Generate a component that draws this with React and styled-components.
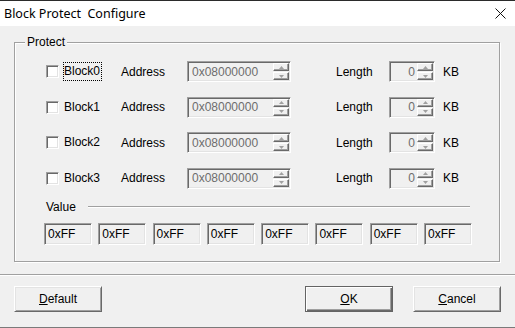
import React from "react";
import styled, { createGlobalStyle } from "styled-components";

const Global = createGlobalStyle`
  html, body { margin: 0; padding: 0; background: #f0f0f0; }
  * { box-sizing: border-box; }
`;

const Window = styled.div`
  width: 515px;
  height: 328px;
  display: flex;
  flex-direction: column;
  background: #f0f0f0;
  border-top: 1px solid #2b2b2b;
  font-family: "Liberation Sans", Arial, sans-serif;
  font-size: 12px;
  color: #000;
  overflow: hidden;
`;

const TitleBar = styled.div`
  height: 25px;
  background: #fff;
  display: flex;
  align-items: center;
  justify-content: space-between;
  padding: 0 9px 0 4px;
  flex-shrink: 0;
`;

const Title = styled.span`
  font-family: "Noto Sans", "Open Sans", sans-serif;
  font-size: 12.5px;
  white-space: pre;
  color: #000;
`;

const CloseIcon = () => (
  <svg width="11" height="11" viewBox="0 0 11 11">
    <path d="M0.5 0.5 L10.5 10.5 M10.5 0.5 L0.5 10.5" stroke="#111" strokeWidth="1" />
  </svg>
);

const Body = styled.div`
  padding: 16px 15px 0 14px;
`;

const Group = styled.div`
  position: relative;
  height: 220px;
  border: 1px solid #a0a0a0;
  box-shadow: inset 1px 1px 0 #fff, 1px 1px 0 #fff;
  padding-top: 18px;
`;

const Legend = styled.span`
  position: absolute;
  top: -8px;
  left: 10px;
  padding: 0 2px;
  background: #f0f0f0;
  line-height: 14px;
`;

const Rows = styled.div`
  display: flex;
  flex-direction: column;
  gap: 14.5px;
  padding-left: 31px;
`;

const Row = styled.div`
  display: flex;
  align-items: center;
  height: 21px;
`;

const CheckCell = styled.div`
  width: 75px;
  display: flex;
  align-items: center;
`;

const CheckBox = styled.span`
  width: 13px;
  height: 13px;
  background: #fff;
  border: 1px solid;
  border-color: #a0a0a0 #fff #fff #a0a0a0;
  box-shadow: inset 1px 1px 0 #696969, inset -1px -1px 0 #e3e3e3;
  margin-right: 4px;
  flex-shrink: 0;
`;

const CheckText = styled.span`
  padding: 1px 1px 2px 0;
  line-height: 14px;
  border: 1px dotted ${(p) => (p.$focus ? "#000" : "transparent")};
`;

const Label = styled.span`
  width: ${(p) => p.$w}px;
  flex-shrink: 0;
`;

const Field = styled.div`
  width: ${(p) => p.$w}px;
  height: 21px;
  flex-shrink: 0;
  display: flex;
  align-items: stretch;
  border: 1px solid;
  border-color: #a0a0a0 #fff #fff #a0a0a0;
  box-shadow: inset 1px 1px 0 #696969, inset -1px -1px 0 #e3e3e3;
  background: #f0f0f0;
  padding: 1px 1px 1px 1px;
`;

const FieldText = styled.span`
  flex: 1;
  display: flex;
  align-items: center;
  justify-content: ${(p) => (p.$right ? "flex-end" : "flex-start")};
  padding: 0 2px 0 3px;
  color: #6d6d6d;
`;

const Spin = styled.div`
  width: 16px;
  display: flex;
  flex-direction: column;
  gap: 1px;
`;

const SpinBtn = styled.div`
  flex: 1;
  background: #f0f0f0;
  border: 1px solid;
  border-color: #fff #696969 #696969 #fff;
  box-shadow: inset -1px -1px 0 #a0a0a0;
  display: flex;
  align-items: center;
  justify-content: center;
`;

const Arrow = ({ down }) => (
  <svg width="5" height="3" viewBox="0 0 5 3">
    <path d={down ? "M0 0 H5 L2.5 3 Z" : "M0 3 H5 L2.5 0 Z"} fill="#a0a0a0" />
  </svg>
);

const SpinBox = ({ w, value, right }) => (
  <Field $w={w}>
    <FieldText $right={right}>{value}</FieldText>
    <Spin>
      <SpinBtn>
        <Arrow />
      </SpinBtn>
      <SpinBtn>
        <Arrow down />
      </SpinBtn>
    </Spin>
  </Field>
);

const ValueHeader = styled.div`
  display: flex;
  align-items: center;
  height: 14px;
  margin-top: 11.5px;
  padding: 0 29px 0 31px;
`;

const Rule = styled.div`
  flex: 1;
  height: 2px;
  margin-left: 12px;
  border-top: 1px solid #a0a0a0;
  border-bottom: 1px solid #fff;
`;

const Values = styled.div`
  display: grid;
  grid-template-columns: repeat(8, 48px);
  column-gap: 6.29px;
  padding-left: 29px;
  margin-top: 9px;
`;

const ValueBox = styled.div`
  height: 22px;
  border: 1px solid;
  border-color: #a0a0a0 #fff #fff #a0a0a0;
  box-shadow: inset 1px 1px 0 #696969, inset -1px -1px 0 #e3e3e3;
  background: #f0f0f0;
  display: flex;
  align-items: center;
  padding-left: 3px;
`;

const Separator = styled.div`
  margin-top: 12px;
  height: 2px;
  border-top: 1px solid #a0a0a0;
  border-bottom: 1px solid #fff;
`;

const Footer = styled.div`
  display: flex;
  padding: 10px 14px 0 14px;
  height: 51px;
`;

const Button = styled.div`
  width: 88px;
  height: 26px;
  display: flex;
  align-items: center;
  justify-content: center;
  background: #f0f0f0;
  border: 1px solid;
  border-color: ${(p) => (p.$default ? "#646464" : "#fff #696969 #696969 #fff")};
  box-shadow: ${(p) =>
    p.$default
      ? "inset 1px 1px 0 #fff, inset -1px -1px 0 #696969, inset -2px -2px 0 #a0a0a0"
      : "inset 1px 1px 0 #e3e3e3, inset -1px -1px 0 #a0a0a0"};
  margin-left: ${(p) => p.$ml || 0}px;
`;

const BottomLine = styled.div`
  height: 1px;
  background: #7a7a7a;
`;

const blocks = ["Block0", "Block1", "Block2", "Block3"];

export default function App() {
  return (
    <>
      <Global />
      <Window>
        <TitleBar>
          <Title>Block Protect  Configure</Title>
          <CloseIcon />
        </TitleBar>
        <Body>
          <Group>
            <Legend>Protect</Legend>
            <Rows>
              {blocks.map((b, i) => (
                <Row key={b}>
                  <CheckCell>
                    <CheckBox />
                    <CheckText $focus={i === 0}>{b}</CheckText>
                  </CheckCell>
                  <Label $w={66}>Address</Label>
                  <SpinBox w={104} value="0x08000000" />
                  <Label $w={45} />
                  <Label $w={53}>Length</Label>
                  <SpinBox w={46} value="0" right />
                  <Label $w={8} />
                  <span>KB</span>
                </Row>
              ))}
            </Rows>
            <ValueHeader>
              <span>Value</span>
              <Rule />
            </ValueHeader>
            <Values>
              {Array.from({ length: 8 }).map((_, i) => (
                <ValueBox key={i}>0xFF</ValueBox>
              ))}
            </Values>
          </Group>
        </Body>
        <Separator />
        <Footer>
          <Button>
            <span>
              <u>D</u>efault
            </span>
          </Button>
          <Button $default $ml={203}>
            <span>
              <u>O</u>K
            </span>
          </Button>
          <Button $ml={20}>
            <span>
              <u>C</u>ancel
            </span>
          </Button>
        </Footer>
        <BottomLine />
      </Window>
    </>
  );
}
